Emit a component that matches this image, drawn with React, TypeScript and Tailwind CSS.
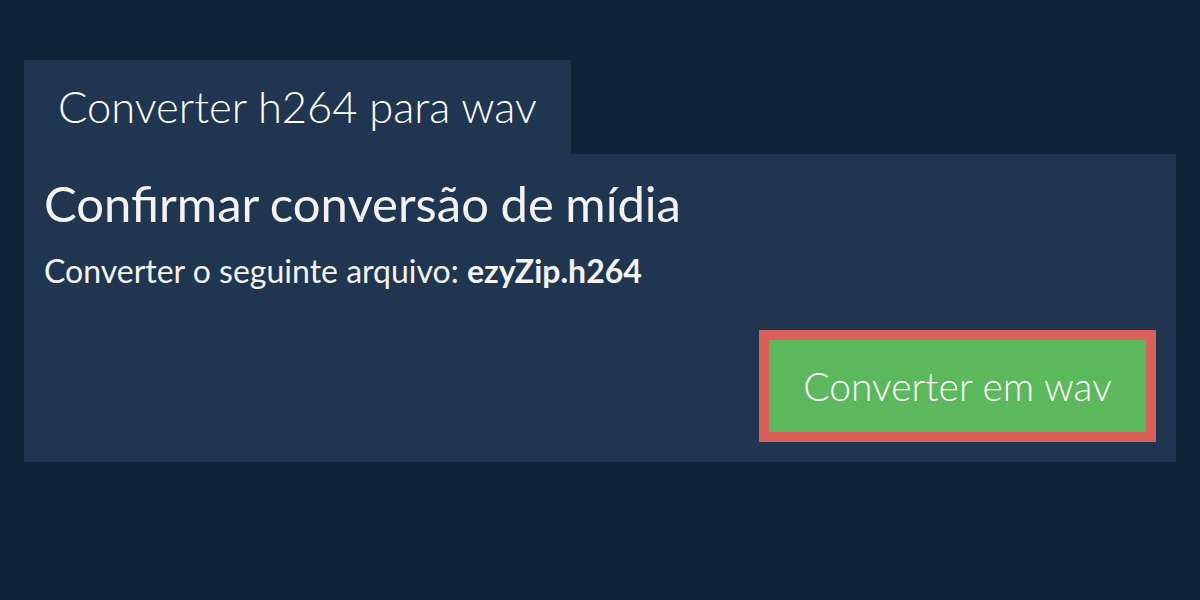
export default function App() {
  return (
    <div className="min-h-[600px] w-full bg-[#0f2339] px-6 pt-[60px] font-['Lato',sans-serif]">
      <div className="flex">
        <div className="h-[94px] bg-[#20354f] pl-[34px] pr-[34px] flex items-center">
          <span className="text-[43.5px] font-light text-white leading-none">Converter h264 para wav</span>
        </div>
      </div>
      <div className="bg-[#20354f] px-5 pt-5 pb-5 flex flex-col">
        <h1 className="text-[49px] font-normal text-[#f3f3f3] leading-[58px] [word-spacing:-1px]">Confirmar conversão de mídia</h1>
        <p className="mt-[21px] text-[32px] font-normal text-[#f3f3f3] leading-[36px]">
          Converter o seguinte arquivo: <b className="font-bold">ezyZip.h264</b>
        </p>
        <div className="flex justify-end mt-[41px]">
          <button className="w-[397px] h-[112px] border-[10px] border-[#db5f5b] bg-[#5cb85c] text-white text-[39px] font-light leading-none">
            Converter em wav
          </button>
        </div>
      </div>
    </div>
  );
}
